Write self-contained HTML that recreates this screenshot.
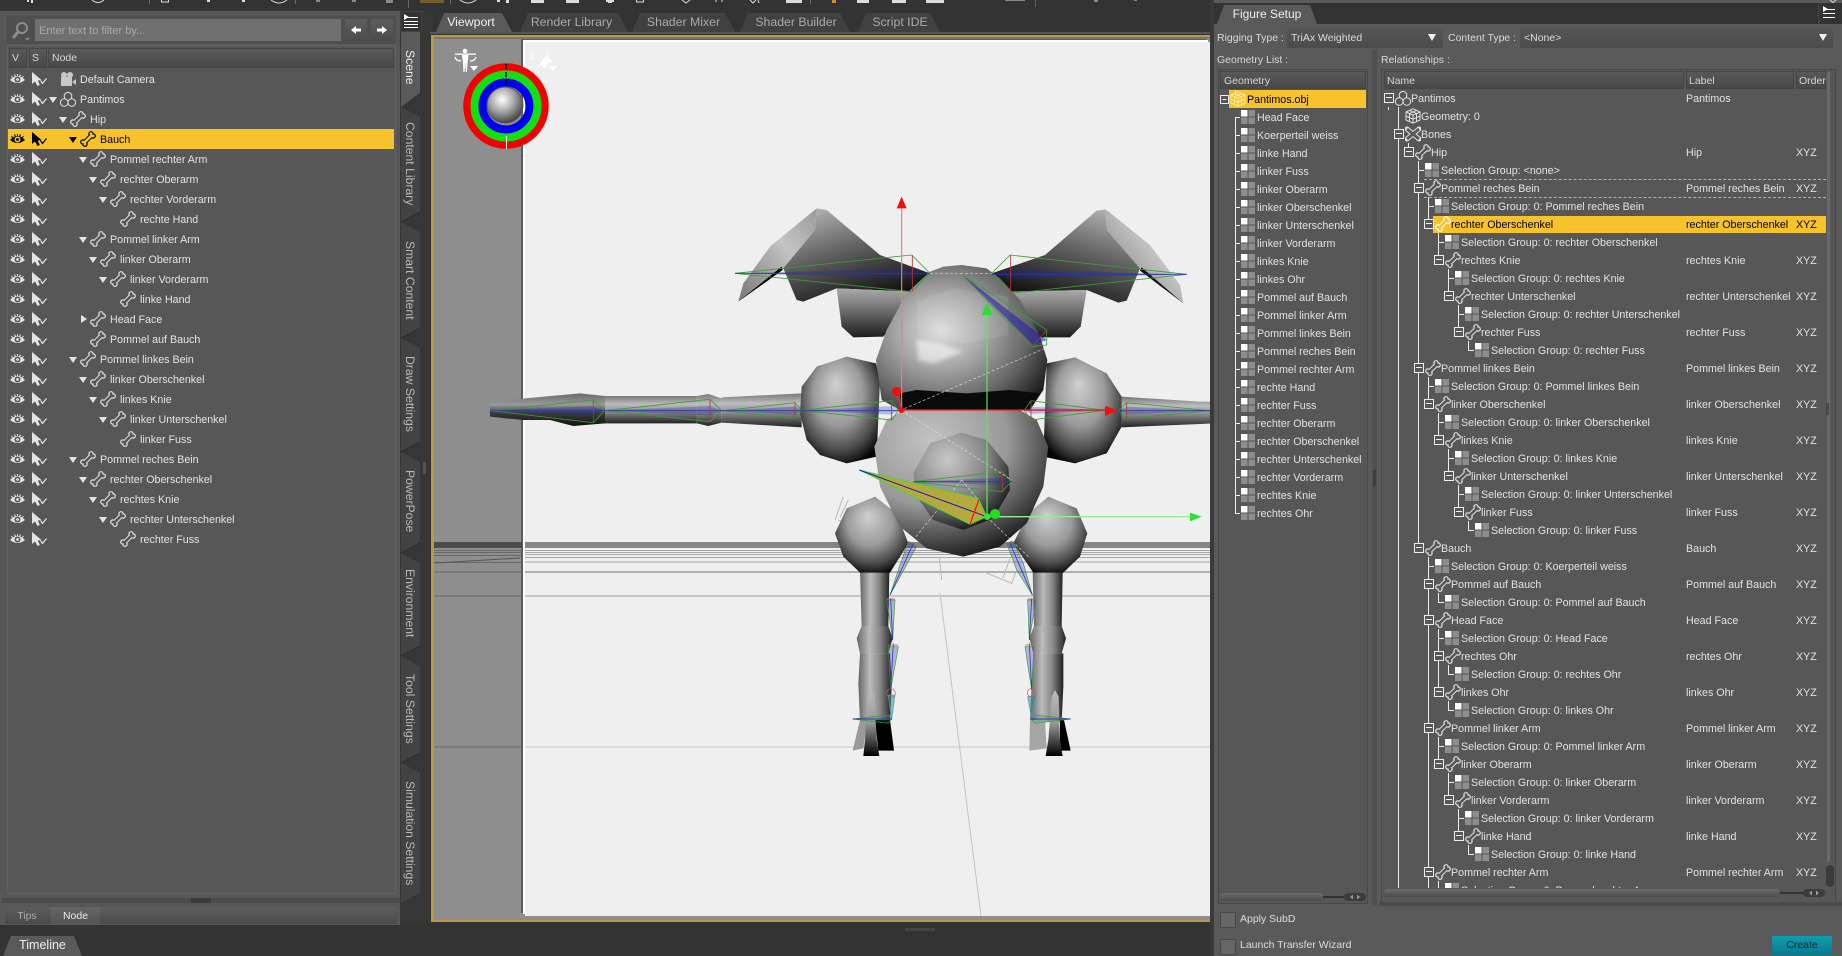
<!DOCTYPE html>
<html><head><meta charset="utf-8"><title>Figure Setup</title>
<style>
html,body{margin:0;padding:0;background:#333;width:1842px;height:956px;overflow:hidden}
body{position:relative;font:10.7px/18px "Liberation Sans",Arial,sans-serif;color:#e2e2e2}
.a{position:absolute;white-space:nowrap}
.l{font-size:10.5px}
svg{display:block;overflow:visible}
:root{--ibg:#575757}
.hd{background:linear-gradient(#5a5a5a,#484848);color:#d6d6d6;line-height:20px;box-shadow:inset 0 0 0 1px #454545;font-size:10.5px}
.lr{position:relative;height:20px;line-height:22px;padding-left:var(--x);white-space:nowrap}
.lr .eye{position:absolute;left:9px;top:4px;width:17px;height:12px}
.lr .cur{position:absolute;left:31px;top:2px;width:16px;height:16px}
.lr .ic{position:absolute;left:calc(var(--x) - 20px);top:2px;width:16px;height:16px}
.lr u{position:absolute;left:calc(var(--x) - 31px);top:8px;width:0;height:0;border-left:4px solid transparent;border-right:4px solid transparent;border-top:6px solid currentColor}
.lr u.c{border:4px solid transparent;border-left:6px solid currentColor;border-right:0;top:6px;left:calc(var(--x) - 29px)}
.sel{background:#f6c32c;color:#000;--ibg:#f6c32c}
.rr{position:relative;height:18px;line-height:20px;padding-left:calc(30px + var(--d)*10px);white-space:nowrap}
.rr>svg{position:absolute;left:calc(14px + var(--d)*10px);top:1px;width:16px;height:16px}
.rr.s>svg{left:calc(13px + var(--d)*10px)}
.rr.s::before{content:"";position:absolute;left:calc(7px + var(--d)*10px);top:9px;width:6px;height:1px;background:#eee}
.rr>i{position:absolute;left:calc(3px + var(--d)*10px);top:4px;width:8px;height:8px;border:1px solid #eee;background:#575757}
.rr>i::after{content:"";position:absolute;left:1px;top:3px;width:6px;height:1px;background:#eee}
.rr>b{position:absolute;left:305px;font-weight:normal}
.rr>em{position:absolute;left:415px;font-style:normal}
.rr.y{color:#000;--ibg:#f6c32c}
.rr.y>svg{color:#fff}
.gr{position:relative;height:18px;line-height:20px;padding-left:38px;white-space:nowrap}
.gr svg{position:absolute;left:21px;top:1px;width:16px;height:16px}
.gr::before{content:"";position:absolute;left:16px;top:9px;width:5px;height:1px;background:#eee}
.tb{position:absolute;top:13px;height:19px;line-height:19px;text-align:center;background:#414141;color:#aaa;font-size:12.300px;box-sizing:border-box;clip-path:polygon(8px 0,calc(100% - 10px) 0,100% 100%,0 100%)}
.vt{position:absolute;left:403px;writing-mode:vertical-rl;font-size:12.200px;line-height:13px;color:#b8b8b8;white-space:nowrap}
.cb{position:absolute;left:1220px;width:14px;height:14px;background:#666;border:1px solid #484848}
</style></head><body>
<svg width="0" height="0" style="position:absolute">
<defs>
<symbol id="eye" viewBox="0 0 16 12"><path d="M0.5 7Q8 -1 15.5 7Q8 13 .5 7z" fill="currentColor"/><circle cx="8" cy="6.5" r="3" fill="var(--ibg)"/><circle cx="8" cy="6.5" r="1.4" fill="currentColor"/><path d="M2 3L3.5 5M5 1.5L6 3.5M8 1V3M11 1.5L10 3.5M14 3L12.5 5" stroke="currentColor" stroke-width="1" fill="none"/></symbol>
<symbol id="cur" viewBox="0 0 16 16"><path d="M1 1V13L4 10.500L6.500 15L8.800 14L6.800 9.500L10.500 9z" fill="currentColor"/><path d="M9.500 9.500L11.500 12.500L15.500 7.500" stroke="currentColor" fill="none" stroke-width="1.200"/></symbol>
<symbol id="bone" viewBox="0 0 16 16"><g fill="currentColor" stroke="none"><circle cx="11" cy="2.800" r="2.700"/><circle cx="13.200" cy="5" r="2.700"/><circle cx="2.800" cy="11" r="2.700"/><circle cx="5" cy="13.200" r="2.700"/></g><path d="M3.800 12.200L12.200 3.800" stroke="currentColor" stroke-width="4.600" fill="none"/><g fill="var(--ibg)"><circle cx="11" cy="2.800" r="1.500"/><circle cx="13.200" cy="5" r="1.500"/><circle cx="2.800" cy="11" r="1.500"/><circle cx="5" cy="13.200" r="1.500"/></g><path d="M3.800 12.200L12.200 3.800" stroke="var(--ibg)" stroke-width="2.600" fill="none"/></symbol>
<symbol id="fig" viewBox="0 0 16 16"><g fill="none" stroke="currentColor" stroke-width="1"><path d="M5 7.500A3.800 3.800 0 1 1 11 7.500"/><circle cx="4.200" cy="11.500" r="3.800"/><circle cx="11.800" cy="11.500" r="3.800"/></g></symbol>
<symbol id="sq" viewBox="0 0 16 16"><rect x="1" y="1" width="6.500" height="6.500" fill="#fff"/><rect x="8.500" y="1" width="6.500" height="6.500" fill="#8d8d8d"/><rect x="1" y="8.500" width="6.500" height="6.500" fill="#8d8d8d"/><rect x="8.500" y="8.500" width="6.500" height="6.500" fill="#8d8d8d"/></symbol>
<symbol id="cube" viewBox="0 0 16 16"><path d="M8 .8L15 4V12L8 15.200L1 12V4zM1 4L8 7.200L15 4M8 7.200V15.200M4.500 2.400L11.500 5.600M11.500 2.400L4.500 5.600M4.500 5.600V13.600M11.500 5.600V13.600M1 8L8 11.200L15 8" fill="none" stroke="currentColor" stroke-width="1"/></symbol>
<symbol id="bones" viewBox="0 0 16 16"><path d="M2 3L14 13M14 3L2 13" stroke="currentColor" stroke-width="5" fill="none"/><g fill="currentColor"><circle cx="2" cy="3" r="2.500"/><circle cx="14" cy="3" r="2.500"/><circle cx="2" cy="13" r="2.500"/><circle cx="14" cy="13" r="2.500"/></g><path d="M2 3L14 13M14 3L2 13" stroke="var(--ibg)" stroke-width="3" fill="none"/></symbol>
<radialGradient id="gS" cx=".5" cy=".42" r=".62" fx=".45" fy=".25"><stop offset="0" stop-color="#d0d0d0"/><stop offset=".5" stop-color="#9a9a9a"/><stop offset=".8" stop-color="#4a4a4a"/><stop offset="1" stop-color="#050505"/></radialGradient>
<radialGradient id="gH" cx=".38" cy=".45" r=".72"><stop offset="0" stop-color="#dcdcdc"/><stop offset=".35" stop-color="#a8a8a8"/><stop offset=".7" stop-color="#666"/><stop offset="1" stop-color="#1a1a1a"/></radialGradient>
<radialGradient id="gL" cx=".32" cy=".2" r=".9"><stop offset="0" stop-color="#c2c2c2"/><stop offset=".5" stop-color="#989898"/><stop offset=".82" stop-color="#3a3a3a"/><stop offset="1" stop-color="#050505"/></radialGradient>
<radialGradient id="gB" cx=".35" cy=".28" r=".8"><stop offset="0" stop-color="#c8c8c8"/><stop offset=".55" stop-color="#808080"/><stop offset="1" stop-color="#0a0a0a"/></radialGradient>
<linearGradient id="gA" x1="0" y1="0" x2="0" y2="1"><stop offset="0" stop-color="#777"/><stop offset=".3" stop-color="#bdbdbd"/><stop offset=".6" stop-color="#858585"/><stop offset="1" stop-color="#222"/></linearGradient>
<linearGradient id="gA2" x1="0" y1="0" x2="0" y2="1"><stop offset="0" stop-color="#6a6a6a"/><stop offset=".35" stop-color="#999"/><stop offset=".6" stop-color="#3c3c3c"/><stop offset="1" stop-color="#111"/></linearGradient>
<linearGradient id="gE1" x1="0" y1="1" x2="1" y2="0"><stop offset="0" stop-color="#777"/><stop offset=".6" stop-color="#c4c4c4"/><stop offset="1" stop-color="#999"/></linearGradient>
<linearGradient id="gE2" x1=".1" y1="0" x2=".6" y2="1"><stop offset="0" stop-color="#bbb"/><stop offset=".45" stop-color="#666"/><stop offset="1" stop-color="#111"/></linearGradient>
<linearGradient id="gE3" x1="0" y1="0" x2="0" y2="1"><stop offset="0" stop-color="#aaa"/><stop offset=".5" stop-color="#666"/><stop offset="1" stop-color="#1c1c1c"/></linearGradient>
<linearGradient id="gE4" x1=".9" y1="0" x2=".4" y2="1"><stop offset="0" stop-color="#bbb"/><stop offset=".45" stop-color="#666"/><stop offset="1" stop-color="#111"/></linearGradient>
<linearGradient id="gLg" x1="0" y1="0" x2="1" y2="0"><stop offset="0" stop-color="#666"/><stop offset=".35" stop-color="#bbb"/><stop offset=".65" stop-color="#888"/><stop offset="1" stop-color="#222"/></linearGradient>
<linearGradient id="gT" x1="0" y1="0" x2="0" y2="1"><stop offset="0" stop-color="#bbb"/><stop offset=".5" stop-color="#999"/><stop offset="1" stop-color="#000"/></linearGradient>
<radialGradient id="gG" cx=".42" cy=".35" r=".65"><stop offset="0" stop-color="#fff"/><stop offset=".5" stop-color="#aaa"/><stop offset="1" stop-color="#444"/></radialGradient>
<clipPath id="vp"><rect x="434" y="37" width="776" height="883"/></clipPath>
<filter id="bl"><feGaussianBlur stdDeviation="6"/></filter>
</defs></svg>

<!-- top bar -->
<div class="a" style="left:0;top:0;width:1842px;height:11px;background:#333"></div>
<svg class="a" style="left:0;top:0" width="1230" height="6"><g fill="#ddd" stroke="none"><rect x="27" y="0" width="2" height="2"/><rect x="31" y="0" width="2" height="3"/><rect x="207" y="0" width="3" height="2"/><rect x="242" y="0" width="3" height="2"/><rect x="497" y="0" width="3" height="2"/><rect x="506" y="0" width="3" height="3"/><rect x="531" y="0" width="13" height="3"/><rect x="566" y="0" width="13" height="3"/><rect x="606" y="0" width="8" height="2"/><rect x="608" y="2" width="4" height="1"/><rect x="786" y="0" width="16" height="3"/><rect x="857" y="0" width="12" height="3"/><rect x="892" y="0" width="14" height="3"/><rect x="926" y="0" width="18" height="3"/></g><g fill="#888"><rect x="316" y="0" width="4" height="2"/><rect x="352" y="0" width="4" height="2"/><rect x="386" y="0" width="7" height="3"/><rect x="1094" y="0" width="4" height="2"/><rect x="1134" y="0" width="3" height="1"/><rect x="1005" y="0" width="20" height="1"/></g><g fill="none" stroke="#ddd"><path d="M92 0Q98 5 104 0M460 0Q468 6 476 0M271 0Q279 6 287 0"/><rect x="161.500" y="-3" width="7" height="5"/><rect x="636.500" y="-3" width="7" height="5"/><path d="M682 0l4 3 4-3M716 0v2M722 0v2M750 0l3 3 3-3M758 0l1 3"/></g><rect x="832" y="0" width="4" height="3" fill="#c8902a"/><rect x="420" y="0" width="24" height="3" fill="#6f6030"/><path d="M149.500 0V4M295.500 0V4M408.500 0V8M450.500 0V4M810.500 0V4M1035.500 0V7" stroke="#666"/></svg>

<!-- left panel -->
<div class="a" style="left:0;top:11px;width:400px;height:914px;background:#575757"></div>
<div class="a" style="left:6px;top:16px;width:390px;height:28px;background:#4f4f4f"></div>
<svg class="a" style="left:11px;top:21px" width="22" height="20"><circle cx="11" cy="7" r="5" fill="none" stroke="#8c8c8c" stroke-width="2"/><path d="M7 11L2 17" stroke="#8c8c8c" stroke-width="3"/><path d="M14 17h5l-2.500 2.500z" fill="#8c8c8c"/></svg>
<div class="a" style="left:35px;top:19px;width:306px;height:22px;background:#707070;color:#a9a9a9;font-size:11px;line-height:24px;text-indent:4px">Enter text to filter by...</div>
<div class="a" style="left:345px;top:19px;width:22px;height:22px;background:linear-gradient(#5d5d5d,#4c4c4c)"></div>
<div class="a" style="left:371px;top:19px;width:22px;height:22px;background:linear-gradient(#5d5d5d,#4c4c4c)"></div>
<svg class="a" style="left:345px;top:19px" width="48" height="22"><path d="M6 11L11 7V9.500H16V12.500H11V15z" fill="#fff"/><path d="M42 11L37 7V9.500H32V12.500H37V15z" fill="#fff"/></svg>
<div class="a" style="left:7px;top:45px;width:387px;height:847px;border:1px solid #636363"></div>
<div class="a hd" style="left:9px;top:48px;width:18px;height:20px;text-indent:3px">V</div>
<div class="a hd" style="left:29px;top:48px;width:18px;height:20px;text-indent:3px">S</div>
<div class="a hd" style="left:48px;top:48px;width:346px;height:20px;text-indent:4px">Node</div>

<div class="a" style="left:0;top:69px;width:394px;color:#e4e4e4">
<div class="lr" style="--x:80px"><svg class="eye"><use href="#eye"/></svg><svg class="cur"><use href="#cur"/></svg><svg class="ic" style="left:60px"><rect x="1" y="6" width="11" height="9" fill="#c8c8c8"/><circle cx="4" cy="4" r="3" fill="#c8c8c8"/><circle cx="10" cy="4" r="3" fill="#c8c8c8"/><path d="M12 11l4-3v6z" fill="#c8c8c8"/></svg>Default Camera</div>
<div class="lr" style="--x:80px"><svg class="eye"><use href="#eye"/></svg><svg class="cur"><use href="#cur"/></svg><u></u><svg class="ic"><use href="#fig"/></svg>Pantimos</div>
<div class="lr" style="--x:90px"><svg class="eye"><use href="#eye"/></svg><svg class="cur"><use href="#cur"/></svg><u></u><svg class="ic"><use href="#bone"/></svg>Hip</div>
<div class="lr sel" style="--x:100px;margin-left:8px;padding-left:92px"><svg class="eye" style="left:1px"><use href="#eye"/></svg><svg class="cur" style="left:23px"><use href="#cur"/></svg><u style="left:61px"></u><svg class="ic" style="left:72px"><use href="#bone"/></svg>Bauch</div>
<div class="lr" style="--x:110px"><svg class="eye"><use href="#eye"/></svg><svg class="cur"><use href="#cur"/></svg><u></u><svg class="ic"><use href="#bone"/></svg>Pommel rechter Arm</div>
<div class="lr" style="--x:120px"><svg class="eye"><use href="#eye"/></svg><svg class="cur"><use href="#cur"/></svg><u></u><svg class="ic"><use href="#bone"/></svg>rechter Oberarm</div>
<div class="lr" style="--x:130px"><svg class="eye"><use href="#eye"/></svg><svg class="cur"><use href="#cur"/></svg><u></u><svg class="ic"><use href="#bone"/></svg>rechter Vorderarm</div>
<div class="lr" style="--x:140px"><svg class="eye"><use href="#eye"/></svg><svg class="cur"><use href="#cur"/></svg><svg class="ic"><use href="#bone"/></svg>rechte Hand</div>
<div class="lr" style="--x:110px"><svg class="eye"><use href="#eye"/></svg><svg class="cur"><use href="#cur"/></svg><u></u><svg class="ic"><use href="#bone"/></svg>Pommel linker Arm</div>
<div class="lr" style="--x:120px"><svg class="eye"><use href="#eye"/></svg><svg class="cur"><use href="#cur"/></svg><u></u><svg class="ic"><use href="#bone"/></svg>linker Oberarm</div>
<div class="lr" style="--x:130px"><svg class="eye"><use href="#eye"/></svg><svg class="cur"><use href="#cur"/></svg><u></u><svg class="ic"><use href="#bone"/></svg>linker Vorderarm</div>
<div class="lr" style="--x:140px"><svg class="eye"><use href="#eye"/></svg><svg class="cur"><use href="#cur"/></svg><svg class="ic"><use href="#bone"/></svg>linke Hand</div>
<div class="lr" style="--x:110px"><svg class="eye"><use href="#eye"/></svg><svg class="cur"><use href="#cur"/></svg><u class="c"></u><svg class="ic"><use href="#bone"/></svg>Head Face</div>
<div class="lr" style="--x:110px"><svg class="eye"><use href="#eye"/></svg><svg class="cur"><use href="#cur"/></svg><svg class="ic"><use href="#bone"/></svg>Pommel auf Bauch</div>
<div class="lr" style="--x:100px"><svg class="eye"><use href="#eye"/></svg><svg class="cur"><use href="#cur"/></svg><u></u><svg class="ic"><use href="#bone"/></svg>Pommel linkes Bein</div>
<div class="lr" style="--x:110px"><svg class="eye"><use href="#eye"/></svg><svg class="cur"><use href="#cur"/></svg><u></u><svg class="ic"><use href="#bone"/></svg>linker Oberschenkel</div>
<div class="lr" style="--x:120px"><svg class="eye"><use href="#eye"/></svg><svg class="cur"><use href="#cur"/></svg><u></u><svg class="ic"><use href="#bone"/></svg>linkes Knie</div>
<div class="lr" style="--x:130px"><svg class="eye"><use href="#eye"/></svg><svg class="cur"><use href="#cur"/></svg><u></u><svg class="ic"><use href="#bone"/></svg>linker Unterschenkel</div>
<div class="lr" style="--x:140px"><svg class="eye"><use href="#eye"/></svg><svg class="cur"><use href="#cur"/></svg><svg class="ic"><use href="#bone"/></svg>linker Fuss</div>
<div class="lr" style="--x:100px"><svg class="eye"><use href="#eye"/></svg><svg class="cur"><use href="#cur"/></svg><u></u><svg class="ic"><use href="#bone"/></svg>Pommel reches Bein</div>
<div class="lr" style="--x:110px"><svg class="eye"><use href="#eye"/></svg><svg class="cur"><use href="#cur"/></svg><u></u><svg class="ic"><use href="#bone"/></svg>rechter Oberschenkel</div>
<div class="lr" style="--x:120px"><svg class="eye"><use href="#eye"/></svg><svg class="cur"><use href="#cur"/></svg><u></u><svg class="ic"><use href="#bone"/></svg>rechtes Knie</div>
<div class="lr" style="--x:130px"><svg class="eye"><use href="#eye"/></svg><svg class="cur"><use href="#cur"/></svg><u></u><svg class="ic"><use href="#bone"/></svg>rechter Unterschenkel</div>
<div class="lr" style="--x:140px"><svg class="eye"><use href="#eye"/></svg><svg class="cur"><use href="#cur"/></svg><svg class="ic"><use href="#bone"/></svg>rechter Fuss</div>
</div>

<div class="a" style="left:2px;top:898px;width:398px;height:5px;background:#4c4c4c"></div>
<div class="a" style="left:191px;top:898px;width:20px;height:5px;background:#3c3c3c"></div>
<div class="a" style="left:5px;top:907px;width:392px;height:17px;background:linear-gradient(#5e5e5e,#4b4b4b)"></div>
<div class="a l" style="left:5px;top:907px;width:44px;height:17px;line-height:18px;text-align:center;color:#aaa;background:linear-gradient(#5c5c5c,#4a4a4a)">Tips</div>
<div class="a l" style="left:51px;top:907px;width:49px;height:17px;line-height:18px;text-align:center;color:#e8e8e8;background:linear-gradient(#666,#555)">Node</div>

<!-- timeline -->
<div class="a" style="left:3px;top:936px;width:79px;height:20px;line-height:19px;text-align:center;font-size:12.500px;color:#eee;background:#5a5a5a;clip-path:polygon(8px 0,calc(100% - 8px) 0,100% 100%,0 100%)">Timeline</div>

<!-- vertical tabs -->
<div class="a" style="left:400px;top:11px;width:33px;height:914px;background:#363636"></div>
<svg class="a" style="left:0;top:0" width="440" height="956"><g fill="#434343"><path d="M401 107L420 117V212L401 222z"/><path d="M401 222L420 232V328L401 338z"/><path d="M401 338L420 348V442L401 452z"/><path d="M401 452L420 462V543L401 553z"/><path d="M401 553L420 563V646L401 656z"/><path d="M401 656L420 666V753L401 763z"/><path d="M401 763L420 773V893L401 903z"/></g><path d="M401 31H420V93L401 107z" fill="#5a5a5a"/><g stroke="#2e2e2e" fill="none"><path d="M401 222L420 212M401 338L420 328M401 452L420 442M401 553L420 543M401 656L420 646M401 763L420 753"/></g><rect x="423" y="462" width="3" height="12" fill="#555"/><rect x="401" y="11.500" width="21" height="20" fill="#333" stroke="#444"/><path d="M404 14L409 17L404 20z" fill="#fff"/><path d="M408 17.500H418M404 21.500H418M404 24.500H418M404 27.500H418" stroke="#fff" fill="none"/></svg>
<div class="vt" style="top:50px;color:#eee">Scene</div>
<div class="vt" style="top:122px">Content Library</div>
<div class="vt" style="top:241px">Smart Content</div>
<div class="vt" style="top:356px">Draw Settings</div>
<div class="vt" style="top:470px">PowerPose</div>
<div class="vt" style="top:569px">Environment</div>
<div class="vt" style="top:674px">Tool Settings</div>
<div class="vt" style="top:781px">Simulation Settings</div>

<!-- viewport tabs -->
<div class="a" style="left:433px;top:11px;width:779px;height:24px;background:#333"></div>
<div class="tb" style="left:436px;width:76px;padding-right:6px;background:#5a5a5a;color:#f0f0f0">Viewport</div>
<div class="tb" style="left:520px;width:108px;padding-right:5px">Render Library</div>
<div class="tb" style="left:632px;width:103px">Shader Mixer</div>
<div class="tb" style="left:740px;width:110px;padding-left:2px">Shader Builder</div>
<div class="tb" style="left:858px;width:82px;padding-left:2px">Script IDE</div>
<div class="a" style="left:430px;top:32px;width:782px;height:2px;background:#555"></div>

<!-- viewport -->
<div class="a" style="left:431px;top:35px;width:779px;height:887px;background:#8e8e8e;border:solid #b89a45;border-width:2px 0 2px 3px;box-sizing:border-box"></div>
<div class="a" style="left:434px;top:37px;width:776px;height:2px;background:#777"></div>
<div class="a" style="left:525px;top:42px;width:685px;height:874px;background:#efefef;box-shadow:-2px -2px 0 #fff,-4px -3px 0 #5c5c5c"></div>
<svg class="a" style="left:0;top:0" width="1842" height="956"><g clip-path="url(#vp)">
<g fill="none"><rect x="434" y="542" width="88" height="6" fill="#4a4a4a"/><path d="M434 550.500H522M434 552.500H522M434 555.500H522M434 562.500H522M434 572H522M434 596H522M434 747H522" stroke="#686868"/><path d="M435 563L520 558" stroke="#555"/><rect x="525" y="542" width="685" height="6" fill="#858585"/><path d="M525 550.500H1210M525 552.500H1210M525 554.500H1210M525 557.500H1210M525 562H1210" stroke="#a6a6a6"/><path d="M525 572H1210" stroke="#999" stroke-width="1.500"/><path d="M525 596H1210" stroke="#b8b8b8" stroke-width="1.500"/><path d="M525 747H1210" stroke="#cacaca"/><path d="M940 593L981 916" stroke="#c4c4c4"/></g>
<g transform="translate(700,180) scale(.33333)">
<g fill="none" stroke="#b8b8b8" stroke-width="3"><path d="M405 1020L430 950M445 960L420 1012M415 1020L470 1042M850 1175L935 1210L950 1170M908 1195L930 1135M1070 635L1135 660L1110 725M718 1130L725 1200"/></g>
<!-- ears -->
<path d="M115 365L130 310L210 200L350 85L345 150L250 265z" fill="url(#gE1)"/>
<path d="M350 85L380 90L540 225L690 280L640 335L410 325L310 365L290 360L250 265L345 150z" fill="url(#gE2)"/>
<path d="M410 325L640 335L610 400L550 470L460 472L425 440z" fill="url(#gE3)"/>
<path d="M115 365L245 260L248 270z" fill="#000"/>
<path d="M1450 370L1440 315L1350 195L1217 88L1220 150L1320 265z" fill="url(#gE1)"/>
<path d="M1217 88L1190 92L1035 225L875 280L930 335L1160 330L1255 368L1280 362L1320 265L1220 150z" fill="url(#gE4)"/>
<path d="M1160 330L930 335L960 400L1020 472L1110 472L1142 440z" fill="url(#gE3)"/>
<path d="M1450 370L1325 262L1320 272z" fill="#111"/>
<!-- legs -->
<g transform="translate(240,1080)">
<path d="M240 95H328L325 260H245z" fill="url(#gLg)"/>
<path d="M245 258H325L338 295L325 340H240L230 295z" fill="url(#gLg)"/>
<path d="M240 340H330L335 440L330 545H240L235 430z" fill="url(#gLg)"/>
<path d="M240 540H262L250 625L218 632z" fill="#999"/>
<path d="M285 540H330L342 632H295z" fill="#000"/>
<path d="M272 450L283 470L290 600L298 648H250L255 600L262 470z" fill="url(#gT)"/>
<path d="M758 95H848L845 260H762z" fill="url(#gLg)"/>
<path d="M762 258H845L858 295L845 340H760L748 295z" fill="url(#gLg)"/>
<path d="M760 340H850L850 440L845 545H750L755 430z" fill="url(#gLg)"/>
<path d="M750 540H795L800 625L748 632z" fill="#a6a6a6"/>
<path d="M840 540H852L872 632H840z" fill="#000"/>
<path d="M825 450L836 470L840 600L848 648H797L805 600L815 470z" fill="url(#gT)"/>
</g>
<!-- foot spheres -->
<path d="M525 950L440 985L405 1060L430 1130L480 1178H570L625 1090L590 1000z" fill="url(#gS)"/>
<path d="M1045 950L1130 985L1162 1060L1140 1130L1090 1178H1000L940 1090L985 1000z" fill="url(#gS)"/>
<!-- arms -->
<path d="M65 652L305 640V742L65 728z" fill="url(#gA)"/>
<path d="M-10 648L25 642L65 655V728L25 738L-10 730z" fill="url(#gA)"/>
<path d="M-290 648H-10V730H-290z" fill="url(#gA)"/>
<path d="M-285 648L-360 640L-525 655L-630 670V710L-530 720L-450 720L-380 738L-285 730z" fill="url(#gA2)"/>
<path d="M1265 650L1500 665L1540 665V730L1500 732L1265 742z" fill="url(#gA)"/>
<!-- shoulders -->
<path d="M440 530L350 560L305 620L300 700L320 780L360 825L440 850L530 830L540 600L528 550z" fill="url(#gS)"/>
<path d="M1125 532L1040 550L1030 830L1125 850L1220 820L1265 740V650L1220 580z" fill="url(#gS)"/>
<!-- lower body -->
<path d="M610 690H960L1010 720L1045 800L1030 920L980 1030L900 1100L790 1130L680 1105L600 1040L540 920L523 800L560 720z" fill="url(#gL)"/>
<!-- head -->
<path d="M785 255L860 265L900 295L960 360L1020 470L1042 540L1030 630L990 690H600L545 660L528 540L560 450L620 340L690 275L730 260z" fill="url(#gH)"/>
<path d="M650 365L760 325L925 350V465L800 490L650 470z" fill="#fff" opacity=".09"/>
<path d="M650 478L720 490L790 515L700 550L655 540z" fill="#fff" opacity=".55" filter="url(#bl)"/>
<path d="M600 640L650 630L800 640L930 630L1020 640L985 688H605z" fill="#0a0a0a"/>
<!-- belly -->
<path d="M785 758L860 780L925 860L930 930L880 1015L790 1050L700 1020L650 950L640 880L690 790z" fill="url(#gB)"/>
<!-- bones -->
<g fill="rgba(40,40,160,.28)" stroke="none">
<path d="M105 280L635 265L690 280L635 295z"/><path d="M1460 283L930 268L875 280L935 298z"/>
<path d="M305 691L575 678L595 691L575 704z"/><path d="M70 692L285 680L305 692L285 704z"/><path d="M-285 692L30 678L65 692L30 706z"/><path d="M-630 692L-320 678L-287 692L-320 706z"/>
<path d="M973 691L993 680L1215 691L993 702z"/><path d="M1255 692L1280 680L1530 692L1280 704z"/>
<path d="M640 905L905 893L935 905L905 917z"/>
</g>
<path d="M785 283L1040 480L1000 495z" fill="rgba(30,30,170,.55)"/>
<g fill="none" stroke="#3d9b3d" stroke-width="2.500">
<path d="M105 280L635 225L690 280L635 335z"/><path d="M1460 283L930 225L875 280L935 340z"/>
<path d="M305 691L575 662L595 691L575 720z"/><path d="M70 692L285 668L305 692L285 715z"/><path d="M-285 692L30 658L65 692L30 725z"/><path d="M-630 692L-320 660L-287 692L-320 728z"/>
<path d="M973 691L993 662L1215 691L993 720z"/><path d="M1255 692L1280 668L1530 692L1280 715z"/>
<path d="M640 905L905 875L935 905L905 935z"/><path d="M785 283L1040 450V495L995 500z"/>
</g>
<path d="M105 280H690M1460 283H875M-630 692H595M973 691H1215M1255 692H1530M640 905H935" stroke="#2a3aa0" stroke-width="2.500" fill="none"/>
<path d="M637 225V335M932 225V340M30 660V725M-320 662V728M285 668V715M575 662V720M993 662V720M1280 668V715M908 878V932M995 500L1040 450" stroke="#b03838" stroke-width="2.500" fill="none"/>
<g fill="none" stroke="#e4e4e4" stroke-width="2" stroke-dasharray="9 6" opacity=".85"><path d="M690 281H875M1035 505L604 690M604 690L935 900M860 1010L985 1130M785 900L640 1080M785 900L840 965"/></g>
<path d="M478 870L835 955L860 1010L810 1033z" fill="#b5a83c" stroke="#33e233" stroke-width="3" stroke-dasharray="5 1"/>
<path d="M478 870L860 1010" stroke="#1414c8" stroke-width="3"/>
<path d="M837 958L810 1033" stroke="#f01c1c" stroke-width="4"/>
<!-- leg bones -->
<g transform="translate(240,1080)">
<g fill="rgba(40,40,160,.3)" stroke="#3d9b3d" stroke-width="2"><path d="M385 5L360 75L330 165L410 20z"/><path d="M680 10L710 90L757 165L730 70L700 5z"/><path d="M320 180L338 300L345 180z"/><path d="M743 180L748 300L768 180z"/><path d="M325 320L332 450L355 320z"/><path d="M735 320L755 450L762 320z"/></g>
<path d="M400 10L330 165M690 10L757 165M332 175L338 300M755 175L748 300M340 310L332 450M748 310L755 450" stroke="#2a3ab0" stroke-width="2.500" fill="none"/>
<g fill="rgba(60,140,140,.55)" stroke="#4a9fb0" stroke-width="2"><path d="M325 465L335 540L345 465z"/><path d="M743 470L755 537L768 465z"/></g>
<g fill="none" stroke="#d8506a" stroke-width="2"><circle cx="333" cy="460" r="13"/><circle cx="755" cy="458" r="13"/><path d="M320 177H345M743 177H768M325 315H355M735 315H762M388 5L412 15M672 13L697 3"/></g>
<path d="M218 537L325 525L335 537L325 550zM872 537L765 525L752 537L765 550z" fill="rgba(60,150,120,.2)" stroke="#3d9b3d" stroke-width="2"/>
<path d="M218 537H335M872 537H752" stroke="#2a3ab0" stroke-width="3"/>
</g>
<!-- axes -->
<path d="M605 690V85" stroke="#f77" stroke-width="3.500"/>
<path d="M605 50L590 85H620z" fill="#f01010"/>
<path d="M605 690H1215" stroke="#f41818" stroke-width="3.500"/>
<path d="M1215 678L1255 692L1215 708z" fill="#f01010"/>
<path d="M590 635L604 690" stroke="#f02020" stroke-width="4"/>
<circle cx="590" cy="635" r="14" fill="#f01010"/><circle cx="604" cy="690" r="9" fill="#f01010"/>
<path d="M861 1010V405" stroke="#5fe85f" stroke-width="3.500"/>
<path d="M861 368L845 405H877z" fill="#2ee02e"/>
<path d="M861 1010H1470" stroke="#8ff08f" stroke-width="4"/>
<path d="M1470 998L1505 1010L1470 1024z" fill="#2ee02e"/>
<circle cx="885" cy="1002" r="15" fill="#1ee01e"/><circle cx="862" cy="1010" r="10" fill="#2ee82e"/>
</g>
</g>
<!-- gizmo -->
<circle cx="506" cy="106" r="39" fill="none" stroke="#f40000" stroke-width="7.500"/>
<circle cx="506" cy="106" r="31.500" fill="none" stroke="#12e012" stroke-width="8"/>
<circle cx="506" cy="106" r="23.500" fill="none" stroke="#0000f0" stroke-width="8"/>
<circle cx="505" cy="105" r="18" fill="url(#gG)" stroke="#555"/>
<path d="M506 64V87" stroke="#000" stroke-width="1.500" stroke-dasharray="5 3"/>
<path d="M506.500 136V149" stroke="#fff"/>
<!-- figure icon -->
<g fill="#fff"><circle cx="465" cy="51" r="2.300"/><rect x="455" y="53.500" width="21" height="1.300"/><path d="M462 55H468.500L467.500 63L467 72H465.800L465.200 64L464.600 72H463.400L463 63z"/></g>
<g fill="none" stroke="#fff" stroke-width="1.300"><path d="M455 57Q456 61 461 61M476 57Q475 61 470 61"/></g>
<path d="M470 66H478L474 71z" fill="#fff"/>
<!-- pin -->
<g fill="#fff"><path d="M547 55L553 62L548 63L545 69L541 65L536 70L541 62L544 58z"/><path d="M549 66H557L553 71z"/></g>
<text x="529" y="59" font-family="Liberation Sans" font-size="11" fill="#fafafa">1 : 1</text>
</svg>
<div class="a" style="left:905px;top:928px;width:30px;height:3px;background:#444"></div>

<!-- figure setup panel -->
<div class="a" style="left:1210px;top:0;width:632px;height:956px;background:#5a5a5a;border-left:4px solid #3a3a3a;box-sizing:border-box"></div>
<div class="a" style="left:1214px;top:3px;width:628px;height:21px;background:#333"></div>
<div class="a" style="left:1217px;top:5px;width:100px;height:19px;background:#5a5a5a;color:#eee;font-size:12px;line-height:19px;text-align:center;clip-path:polygon(7px 0,calc(100% - 7px) 0,100% 100%,0 100%)">Figure Setup</div>
<svg class="a" style="left:1816px;top:0" width="26" height="24"><path d="M14 0l3 2.500L20 0" stroke="#ddd" fill="none"/><path d="M3 3.500V24" stroke="#4a4a4a"/><path d="M7 6L12 9L7 12z" fill="#fff"/><path d="M11 9.500H19M7 13.500H19M7 17.500H19" stroke="#fff"/></svg>
<div class="a l" style="left:1217px;top:28px;line-height:20px;color:#d8d8d8">Rigging Type :</div>
<div class="a l" style="left:1287px;top:28px;width:156px;height:20px;line-height:20px;background:linear-gradient(#565656,#4c4c4c);text-indent:4px;color:#ddd">TriAx Weighted</div>
<div class="a l" style="left:1448px;top:28px;line-height:20px;color:#d8d8d8">Content Type :</div>
<div class="a l" style="left:1520px;top:28px;width:313px;height:20px;line-height:20px;background:linear-gradient(#565656,#4c4c4c);text-indent:4px;color:#ddd">&lt;None&gt;</div>
<svg class="a" style="left:1420px;top:30px" width="420" height="16"><path d="M8 4H16L12 11z" fill="#eee"/><path d="M399 4H407L403 11z" fill="#eee"/></svg>
<div class="a l" style="left:1217px;top:50px;line-height:20px;color:#d8d8d8">Geometry List :</div>
<div class="a l" style="left:1381px;top:50px;line-height:20px;color:#d8d8d8">Relationships :</div>
<div class="a" style="left:1372px;top:50px;width:5px;height:856px;background:#505050"></div>
<div class="a" style="left:1373px;top:470px;width:3px;height:16px;background:#3f3f3f"></div>

<!-- geometry list -->
<div class="a" style="left:1218px;top:69px;width:148px;height:833px;border:1px solid #484848;background:#575757"></div>
<div class="a hd" style="left:1220px;top:71px;width:146px;height:18px;line-height:21px;text-indent:4px">Geometry</div>
<div class="a" style="left:1229px;top:90px;width:137px;height:18px;background:#f6c32c"></div>
<svg class="a" style="left:1218px;top:90px" width="30" height="440"><path d="M17.500 0V5M17.500 27V423" stroke="#eee"/><rect x="2.500" y="5.500" width="8" height="8" fill="#575757" stroke="#eee"/><path d="M4.500 9.500H8.500" stroke="#eee"/></svg>
<svg class="a" style="left:1230px;top:91px;width:16px;height:16px;color:#fdeaa8"><use href="#cube"/></svg>
<div class="a" style="left:1247px;top:90px;color:#000;line-height:20px">Pantimos.obj</div>
<div class="a" style="left:1219px;top:108px;width:147px">
<div class="gr"><svg><use href="#sq"/></svg>Head Face</div>
<div class="gr"><svg><use href="#sq"/></svg>Koerperteil weiss</div>
<div class="gr"><svg><use href="#sq"/></svg>linke Hand</div>
<div class="gr"><svg><use href="#sq"/></svg>linker Fuss</div>
<div class="gr"><svg><use href="#sq"/></svg>linker Oberarm</div>
<div class="gr"><svg><use href="#sq"/></svg>linker Oberschenkel</div>
<div class="gr"><svg><use href="#sq"/></svg>linker Unterschenkel</div>
<div class="gr"><svg><use href="#sq"/></svg>linker Vorderarm</div>
<div class="gr"><svg><use href="#sq"/></svg>linkes Knie</div>
<div class="gr"><svg><use href="#sq"/></svg>linkes Ohr</div>
<div class="gr"><svg><use href="#sq"/></svg>Pommel auf Bauch</div>
<div class="gr"><svg><use href="#sq"/></svg>Pommel linker Arm</div>
<div class="gr"><svg><use href="#sq"/></svg>Pommel linkes Bein</div>
<div class="gr"><svg><use href="#sq"/></svg>Pommel reches Bein</div>
<div class="gr"><svg><use href="#sq"/></svg>Pommel rechter Arm</div>
<div class="gr"><svg><use href="#sq"/></svg>rechte Hand</div>
<div class="gr"><svg><use href="#sq"/></svg>rechter Fuss</div>
<div class="gr"><svg><use href="#sq"/></svg>rechter Oberarm</div>
<div class="gr"><svg><use href="#sq"/></svg>rechter Oberschenkel</div>
<div class="gr"><svg><use href="#sq"/></svg>rechter Unterschenkel</div>
<div class="gr"><svg><use href="#sq"/></svg>rechter Vorderarm</div>
<div class="gr"><svg><use href="#sq"/></svg>rechtes Knie</div>
<div class="gr"><svg><use href="#sq"/></svg>rechtes Ohr</div>
</div>
<div class="a" style="left:1220px;top:893px;width:103px;height:8px;background:linear-gradient(#6c6c6c,#4c4c4c);border-radius:3px"></div>
<div class="a" style="left:1323px;top:896px;width:21px;height:2px;background:#333"></div>
<div class="a" style="left:1344px;top:893px;width:22px;height:8px;background:#3c3c3c;border-radius:4px"></div>
<svg class="a" style="left:1344px;top:893px" width="22" height="8"><path d="M9 1.500L6 4L9 6.500zM13 1.500L16 4L13 6.500z" fill="#999"/></svg>

<!-- relationships -->
<div class="a" style="left:1381px;top:69px;width:453px;height:833px;border:1px solid #484848;background:#575757"></div>
<div class="a hd" style="left:1384px;top:71px;width:300px;height:18px;line-height:21px;text-indent:3px">Name</div>
<div class="a hd" style="left:1686px;top:71px;width:108px;height:18px;line-height:21px;text-indent:3px">Label</div>
<div class="a hd" style="left:1796px;top:71px;width:30px;height:18px;line-height:21px;text-indent:3px;overflow:hidden">Order</div>
<div class="a" style="left:1381px;top:89px;width:445px;height:799px;overflow:hidden">
<div class="a" style="left:52px;top:127px;width:393px;height:17px;background:#f6c32c"></div>
<div class="a" style="left:43px;top:90px;width:402px;height:17px;border:dashed #e0b030;border-width:1px 0"></div>
<svg class="a" style="left:0;top:0" width="445" height="799" viewBox="1381 89 445 799"><path d="M1398.500 107V888M1408.500 143V148M1418.500 161V548M1428.500 197V224M1428.500 377V404M1428.500 557V888M1438.500 233V260M1448.500 269V296M1458.500 305V332M1468.500 341V350M1438.500 413V440M1448.500 449V476M1458.500 485V512M1468.500 521V530M1438.500 593V602M1438.500 629V692M1448.500 665V674M1448.500 701V710M1438.500 737V764M1448.500 773V800M1458.500 809V836M1468.500 845V854M1438.500 881V888M1388.500 107V110" stroke="#eee" fill="none"/></svg>
<div class="a" style="left:0;top:0;width:445px">
<div class="rr" style="--d:0"><i></i><svg><use href="#fig"/></svg>Pantimos<b>Pantimos</b></div>
<div class="rr" style="--d:1"><svg><use href="#cube"/></svg>Geometry: 0</div>
<div class="rr" style="--d:1"><i></i><svg><use href="#bones"/></svg>Bones</div>
<div class="rr" style="--d:2"><i></i><svg><use href="#bone"/></svg>Hip<b>Hip</b><em>XYZ</em></div>
<div class="rr s" style="--d:3"><svg><use href="#sq"/></svg>Selection Group: &lt;none&gt;</div>
<div class="rr" style="--d:3"><i></i><svg><use href="#bone"/></svg>Pommel reches Bein<b>Pommel reches Bein</b><em>XYZ</em></div>
<div class="rr s" style="--d:4"><svg><use href="#sq"/></svg>Selection Group: 0: Pommel reches Bein</div>
<div class="rr y" style="--d:4"><i></i><svg><use href="#bone"/></svg>rechter Oberschenkel<b>rechter Oberschenkel</b><em>XYZ</em></div>
<div class="rr s" style="--d:5"><svg><use href="#sq"/></svg>Selection Group: 0: rechter Oberschenkel</div>
<div class="rr" style="--d:5"><i></i><svg><use href="#bone"/></svg>rechtes Knie<b>rechtes Knie</b><em>XYZ</em></div>
<div class="rr s" style="--d:6"><svg><use href="#sq"/></svg>Selection Group: 0: rechtes Knie</div>
<div class="rr" style="--d:6"><i></i><svg><use href="#bone"/></svg>rechter Unterschenkel<b>rechter Unterschenkel</b><em>XYZ</em></div>
<div class="rr s" style="--d:7"><svg><use href="#sq"/></svg>Selection Group: 0: rechter Unterschenkel</div>
<div class="rr" style="--d:7"><i></i><svg><use href="#bone"/></svg>rechter Fuss<b>rechter Fuss</b><em>XYZ</em></div>
<div class="rr s" style="--d:8"><svg><use href="#sq"/></svg>Selection Group: 0: rechter Fuss</div>
<div class="rr" style="--d:3"><i></i><svg><use href="#bone"/></svg>Pommel linkes Bein<b>Pommel linkes Bein</b><em>XYZ</em></div>
<div class="rr s" style="--d:4"><svg><use href="#sq"/></svg>Selection Group: 0: Pommel linkes Bein</div>
<div class="rr" style="--d:4"><i></i><svg><use href="#bone"/></svg>linker Oberschenkel<b>linker Oberschenkel</b><em>XYZ</em></div>
<div class="rr s" style="--d:5"><svg><use href="#sq"/></svg>Selection Group: 0: linker Oberschenkel</div>
<div class="rr" style="--d:5"><i></i><svg><use href="#bone"/></svg>linkes Knie<b>linkes Knie</b><em>XYZ</em></div>
<div class="rr s" style="--d:6"><svg><use href="#sq"/></svg>Selection Group: 0: linkes Knie</div>
<div class="rr" style="--d:6"><i></i><svg><use href="#bone"/></svg>linker Unterschenkel<b>linker Unterschenkel</b><em>XYZ</em></div>
<div class="rr s" style="--d:7"><svg><use href="#sq"/></svg>Selection Group: 0: linker Unterschenkel</div>
<div class="rr" style="--d:7"><i></i><svg><use href="#bone"/></svg>linker Fuss<b>linker Fuss</b><em>XYZ</em></div>
<div class="rr s" style="--d:8"><svg><use href="#sq"/></svg>Selection Group: 0: linker Fuss</div>
<div class="rr" style="--d:3"><i></i><svg><use href="#bone"/></svg>Bauch<b>Bauch</b><em>XYZ</em></div>
<div class="rr s" style="--d:4"><svg><use href="#sq"/></svg>Selection Group: 0: Koerperteil weiss</div>
<div class="rr" style="--d:4"><i></i><svg><use href="#bone"/></svg>Pommel auf Bauch<b>Pommel auf Bauch</b><em>XYZ</em></div>
<div class="rr s" style="--d:5"><svg><use href="#sq"/></svg>Selection Group: 0: Pommel auf Bauch</div>
<div class="rr" style="--d:4"><i></i><svg><use href="#bone"/></svg>Head Face<b>Head Face</b><em>XYZ</em></div>
<div class="rr s" style="--d:5"><svg><use href="#sq"/></svg>Selection Group: 0: Head Face</div>
<div class="rr" style="--d:5"><i></i><svg><use href="#bone"/></svg>rechtes Ohr<b>rechtes Ohr</b><em>XYZ</em></div>
<div class="rr s" style="--d:6"><svg><use href="#sq"/></svg>Selection Group: 0: rechtes Ohr</div>
<div class="rr" style="--d:5"><i></i><svg><use href="#bone"/></svg>linkes Ohr<b>linkes Ohr</b><em>XYZ</em></div>
<div class="rr s" style="--d:6"><svg><use href="#sq"/></svg>Selection Group: 0: linkes Ohr</div>
<div class="rr" style="--d:4"><i></i><svg><use href="#bone"/></svg>Pommel linker Arm<b>Pommel linker Arm</b><em>XYZ</em></div>
<div class="rr s" style="--d:5"><svg><use href="#sq"/></svg>Selection Group: 0: Pommel linker Arm</div>
<div class="rr" style="--d:5"><i></i><svg><use href="#bone"/></svg>linker Oberarm<b>linker Oberarm</b><em>XYZ</em></div>
<div class="rr s" style="--d:6"><svg><use href="#sq"/></svg>Selection Group: 0: linker Oberarm</div>
<div class="rr" style="--d:6"><i></i><svg><use href="#bone"/></svg>linker Vorderarm<b>linker Vorderarm</b><em>XYZ</em></div>
<div class="rr s" style="--d:7"><svg><use href="#sq"/></svg>Selection Group: 0: linker Vorderarm</div>
<div class="rr" style="--d:7"><i></i><svg><use href="#bone"/></svg>linke Hand<b>linke Hand</b><em>XYZ</em></div>
<div class="rr s" style="--d:8"><svg><use href="#sq"/></svg>Selection Group: 0: linke Hand</div>
<div class="rr" style="--d:4"><i></i><svg><use href="#bone"/></svg>Pommel rechter Arm<b>Pommel rechter Arm</b><em>XYZ</em></div>
<div class="rr s" style="--d:5"><svg><use href="#sq"/></svg>Selection Group: 0: Pommel rechter Arm</div>
</div>
</div>
<div class="a" style="left:1384px;top:889px;width:396px;height:8px;background:linear-gradient(#6c6c6c,#4c4c4c);border-radius:3px"></div>
<div class="a" style="left:1780px;top:892px;width:23px;height:2px;background:#333"></div>
<div class="a" style="left:1803px;top:889px;width:22px;height:8px;background:#3c3c3c;border-radius:4px"></div>
<svg class="a" style="left:1803px;top:889px" width="22" height="8"><path d="M9 1.500L6 4L9 6.500zM13 1.500L16 4L13 6.500z" fill="#999"/></svg>
<div class="a" style="left:1827px;top:72px;width:3px;height:790px;background:#6a6a6a"></div>
<div class="a" style="left:1826px;top:403px;width:3px;height:12px;background:#4a4a4a"></div>
<div class="a" style="left:1826px;top:865px;width:8px;height:22px;background:#3c3c3c;border-radius:4px"></div>
<div class="a" style="left:1379px;top:902px;width:463px;height:4px;background:#4c4c4c"></div>

<!-- bottom -->
<div class="cb" style="top:912px"></div>
<div class="a l" style="left:1240px;top:910px;color:#ddd">Apply SubD</div>
<div class="cb" style="top:939px"></div>
<div class="a l" style="left:1240px;top:936px;color:#ddd">Launch Transfer Wizard</div>
<div class="a l" style="left:1772px;top:936px;width:60px;height:19px;line-height:19px;text-align:center;color:#0c2a30;background:linear-gradient(#0f9db2,#08798c)">Create</div>
</body></html>
